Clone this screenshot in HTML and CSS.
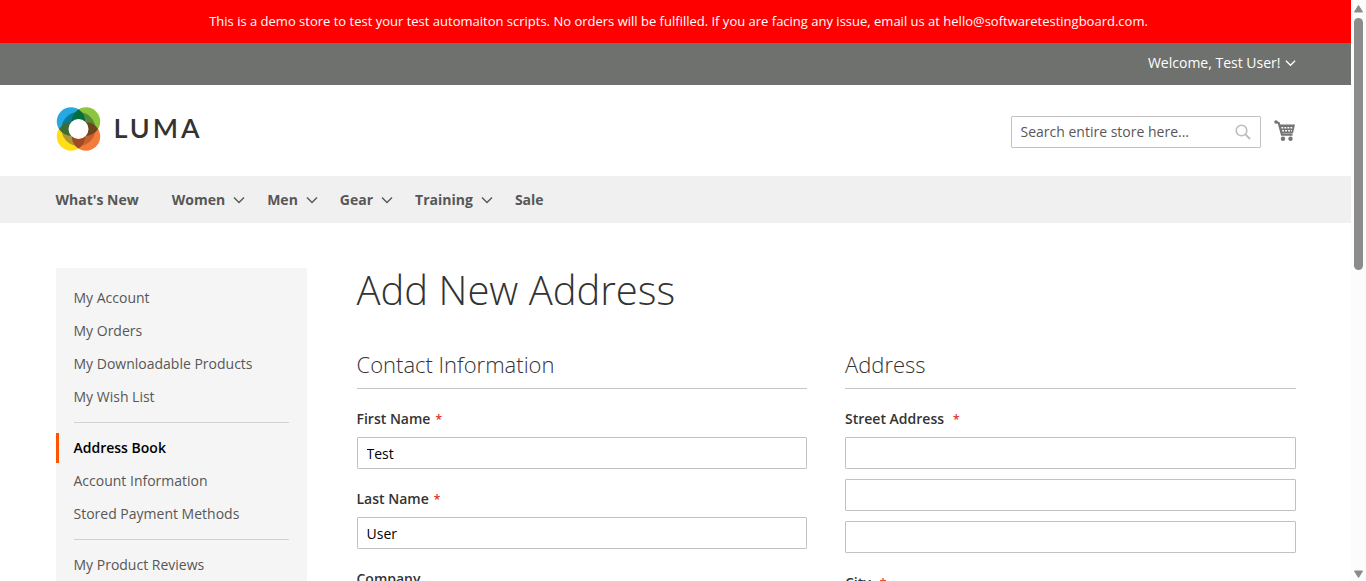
FILE: index.html
```
<!DOCTYPE html>
<html lang="en">
<head>
<meta charset="utf-8">
<title>Add New Address</title>
<link rel="stylesheet" href="styles.css">
</head>
<body>
<svg class="defs" aria-hidden="true">
  <symbol id="chevron" viewBox="0 0 12 8"><path d="M1 1.5 6 6.5 11 1.5" fill="none" stroke="currentColor" stroke-width="1.4"/></symbol>
</svg>
<div class="window">
  <div class="page">
    <p class="notice">This is a demo store to test your test automaiton scripts. No orders will be fulfilled. If you are facing any issue, email us at hello@softwaretestingboard.com.</p>
    <div class="panel">
      <div class="container panel-row">
        <button class="welcome" type="button">Welcome, Test User! <svg class="welcome-arrow"><use href="#chevron"/></svg></button>
      </div>
    </div>
    <header class="container header">
      <a class="logo" href="#">
        <svg class="logo-mark" viewBox="0 0 44 44" aria-hidden="true">
          <defs>
            <clipPath id="tl"><circle cx="14.5" cy="14.5" r="14.2"/></clipPath>
            <clipPath id="br"><circle cx="29.5" cy="29.5" r="14.2"/></clipPath>
          </defs>
          <circle cx="14.5" cy="14.5" r="14.2" fill="#26a8e0"/>
          <circle cx="29.5" cy="14.5" r="14.2" fill="#8cc63f"/>
          <circle cx="14.5" cy="29.5" r="14.2" fill="#ffde17"/>
          <circle cx="29.5" cy="29.5" r="14.2" fill="#f47b3a"/>
          <path d="M22 22V5A17 17 0 0 0 5 22Z" fill="#087a9c"/>
          <path d="M22 22V5A17 17 0 0 1 39 22Z" fill="#568a3b"/>
          <path d="M22 22H5A17 17 0 0 0 22 39Z" fill="#ae9634"/>
          <path d="M22 22H39A17 17 0 0 1 22 39Z" fill="#c8602e"/>
          <g clip-path="url(#tl)">
            <circle cx="29.5" cy="14.5" r="14.2" fill="#006f3b"/>
            <circle cx="14.5" cy="29.5" r="14.2" fill="#3d6c34"/>
          </g>
          <g clip-path="url(#br)">
            <circle cx="29.5" cy="14.5" r="14.2" fill="#6c471d"/>
            <circle cx="14.5" cy="29.5" r="14.2" fill="#a14a26"/>
          </g>
          <circle cx="22" cy="22" r="10" fill="#fff"/>
        </svg>
        <span class="logo-name">LUMA</span>
      </a>
      <div class="header-tools">
        <form class="search">
          <input class="search-input" type="text" placeholder="Search entire store here..." aria-label="Search">
          <button class="search-button" type="button" aria-label="Search">
            <svg class="search-icon" viewBox="0 0 16 16"><circle cx="6.5" cy="6.5" r="5.3" fill="none" stroke="currentColor" stroke-width="1.6"/><path d="M10.4 10.4 15 15" stroke="currentColor" stroke-width="2"/></svg>
          </button>
        </form>
        <a class="cart" href="#" aria-label="My Cart">
          <svg class="cart-icon" viewBox="0 0 22 22">
            <path d="M1.5 1.8 4.7 3 8 14.6H18.5" fill="none" stroke="currentColor" stroke-width="2.2"/>
            <circle cx="2" cy="2" r="1.8" fill="currentColor"/>
            <path d="M5 4.5H21L19 13.2H7Z" fill="currentColor"/>
            <path d="M7.4 7.8H19M8.2 10.8H18" stroke="#fff" stroke-width="1.4" stroke-dasharray="1.8 1.2"/>
            <circle cx="9" cy="18.8" r="2.2" fill="currentColor"/><circle cx="16.5" cy="18.8" r="2.2" fill="currentColor"/>
          </svg>
        </a>
      </div>
    </header>
    <nav class="nav">
      <div class="container nav-row">
        <a class="nav-link nav-first" href="#">What's New</a>
        <a class="nav-link" href="#">Women <svg class="nav-arrow"><use href="#chevron"/></svg></a>
        <a class="nav-link" href="#">Men <svg class="nav-arrow"><use href="#chevron"/></svg></a>
        <a class="nav-link" href="#">Gear <svg class="nav-arrow"><use href="#chevron"/></svg></a>
        <a class="nav-link" href="#">Training <svg class="nav-arrow"><use href="#chevron"/></svg></a>
        <a class="nav-link" href="#">Sale</a>
      </div>
    </nav>
    <div class="container columns">
      <aside class="sidebar">
        <ul class="menu">
          <li><a class="menu-link" href="#">My Account</a></li>
          <li><a class="menu-link" href="#">My Orders</a></li>
          <li><a class="menu-link" href="#">My Downloadable Products</a></li>
          <li><a class="menu-link" href="#">My Wish List</a></li>
          <li class="delimiter"></li>
          <li><a class="menu-link current" href="#">Address Book</a></li>
          <li><a class="menu-link" href="#">Account Information</a></li>
          <li><a class="menu-link" href="#">Stored Payment Methods</a></li>
          <li class="delimiter"></li>
          <li><a class="menu-link" href="#">My Product Reviews</a></li>
        </ul>
      </aside>
      <main class="main">
        <h1 class="title">Add New Address</h1>
        <form class="form">
          <section>
            <h2 class="legend">Contact Information</h2>
            <div class="field">
              <label class="label required" for="first">First Name</label>
              <input class="input" id="first" type="text" value="Test">
            </div>
            <div class="field">
              <label class="label required" for="last">Last Name</label>
              <input class="input" id="last" type="text" value="User">
            </div>
            <div class="field">
              <label class="label" for="company">Company</label>
              <input class="input" id="company" type="text">
            </div>
          </section>
          <section>
            <h2 class="legend">Address</h2>
            <div class="field">
              <label class="label required wide" for="street">Street Address</label>
              <input class="input" id="street" type="text">
              <input class="input" type="text" aria-label="Street Address: Line 2">
              <input class="input" type="text" aria-label="Street Address: Line 3">
            </div>
            <div class="field">
              <label class="label required wide" for="city">City</label>
              <input class="input" id="city" type="text">
            </div>
          </section>
        </form>
      </main>
    </div>
  </div>
  <div class="scrollbar" aria-hidden="true">
    <svg class="scroll-arrow" viewBox="0 0 9 8"><path d="M4.5 0.5 8.5 7H0.5Z" fill="#8b8b8b" stroke="#8b8b8b" stroke-linejoin="round"/></svg>
    <div class="scroll-track"><div class="scroll-thumb"></div></div>
    <svg class="scroll-arrow" viewBox="0 0 9 8"><path d="M4.5 7.5 8.5 1H0.5Z" fill="#8b8b8b" stroke="#8b8b8b" stroke-linejoin="round"/></svg>
  </div>
</div>
</body>
</html>
```
FILE: styles.css
```
* { box-sizing: border-box; }
body {
  margin: 0;
  font: 14px/20px "Open Sans", "Noto Sans", sans-serif;
  color: #333;
  background: #fff;
}
a { color: inherit; text-decoration: none; }
button { font: inherit; color: inherit; background: none; border: 0; padding: 0; }
.defs { display: none; }
.window { display: flex; height: 100vh; }
.page { flex: 1; min-width: 0; overflow: hidden; }
.container { max-width: 1280px; margin: 0 auto; padding: 0 20px; }

.notice {
  margin: 0;
  padding: 12px 10px 12px 16px;
  background: #f00;
  color: #fff;
  font-size: 13px;
  line-height: 19px;
  text-align: center;
}
.panel { background: #6e716e; color: #fff; }
.panel-row { display: flex; justify-content: flex-end; padding-top: 10px; padding-bottom: 12px; }
.welcome { display: flex; align-items: center; gap: 4px; }
.welcome-arrow { width: 11px; height: 8px; }

.header { display: flex; align-items: center; justify-content: space-between; height: 91px; }
.logo { display: flex; align-items: center; gap: 13px; padding-bottom: 3px; }
.logo-mark { width: 45px; height: 44px; }
.logo-name { padding-bottom: 2px; font: 600 27px/42px Lato, sans-serif; letter-spacing: 3px; }
.header-tools { display: flex; align-items: center; gap: 13px; padding-top: 2px; }
.search { position: relative; }
.search-input, .input {
  display: block;
  width: 100%;
  height: 32px;
  padding: 0 9px;
  border: 1px solid #c2c2c2;
  border-radius: 1px;
  background: #fff;
  font: inherit;
  color: #000;
}
.search-input { width: 250px; padding: 0 35px 0 9px; }
.search-input::placeholder { color: #575757; opacity: 1; }
.search-button { position: absolute; top: 8px; right: 10px; display: flex; color: #bdbdbd; }
.search-icon { width: 16px; height: 16px; }
.cart { display: flex; padding-bottom: 2px; color: #757575; }
.cart-icon { width: 22px; height: 22px; }

.nav { background: #f0f0f0; color: #575757; font-weight: 700; }
.nav-row { display: flex; gap: 22px; padding-top: 14px; padding-bottom: 13px; }
.nav-link { display: flex; align-items: center; gap: 8px; }
.nav-first { margin-right: 11px; }
.nav-arrow { width: 12px; height: 8px; }

.columns { display: grid; grid-template-columns: 251px 1fr; gap: 50px; padding-top: 45px; }
.sidebar { padding: 15px 0; background: #f5f5f5; }
.menu { list-style: none; margin: 0; padding: 0; display: grid; gap: 3px; }
.menu-link { display: block; padding: 5px 15px; border-left: 3px solid transparent; color: #575757; }
.current { border-color: #ff5501; color: #000; font-weight: 600; }
.delimiter { margin: 7px 18px; border-top: 1px solid #d1d1d1; }

.title { margin: 0 0 39px; font-size: 40px; line-height: 44px; font-weight: 300; }
.form { display: grid; grid-template-columns: 1fr 1fr; gap: 38px; }
.legend { margin: 0 0 20px; padding-bottom: 11px; border-bottom: 1px solid #c5c5c5; font-size: 22px; line-height: 26px; font-weight: 300; }
.field { display: grid; gap: 10px; margin-bottom: 20px; }
.label { height: 18px; font-weight: 600; }
.required::after { content: "*"; margin-left: 5px; color: #e02b27; font-size: 12px; font-weight: 600; }
.wide::after { margin-left: 9px; }

.scrollbar { display: flex; flex-direction: column; align-items: center; width: 15px; padding: 5px 0 3px; background: #fcfcfc; }
.scroll-arrow { width: 9px; height: 8px; }
.scroll-track { flex: 1; padding: 5px 0; }
.scroll-thumb { width: 9px; height: 46%; border-radius: 5px; background: #8b8b8b; }
```
